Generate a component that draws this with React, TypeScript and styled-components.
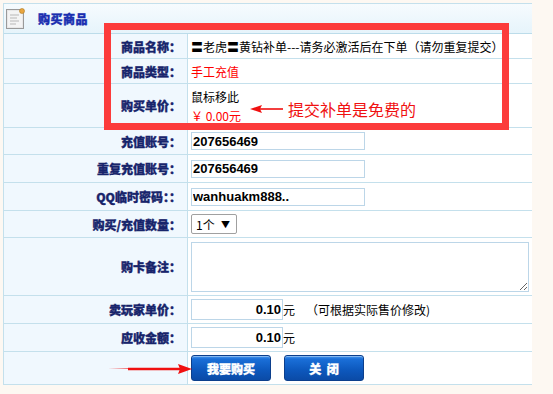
import React from 'react';
import styled, { createGlobalStyle } from 'styled-components';

const GlobalStyle = createGlobalStyle`
  html, body {
    margin: 0;
    padding: 0;
    background: #fdf8f2;
  }
  body {
    font-family: "Noto Sans CJK SC", "Liberation Sans", sans-serif;
    font-size: 12px;
  }
`;

const Page = styled.div`
  position: relative;
  width: 553px;
  height: 394px;
  padding: 3px 0 0 3px;
  box-sizing: border-box;
`;

const Table = styled.div`
  width: 529px;
  border-top: 1px solid #c4e0ec;
  border-left: 1px solid #c4e0ec;
  box-sizing: border-box;
  display: flex;
  flex-direction: column;
`;

const Header = styled.div`
  height: 30px;
  box-sizing: border-box;
  border-bottom: 1px solid #bcdcea;
  background: linear-gradient(#f6fbfe, #e6f4fb);
  display: flex;
  align-items: center;
  padding-left: 2px;
  gap: 12px;
`;

const Title = styled.span`
  font-weight: 900;
  font-size: 12px;
  color: #1a2fb0;
  letter-spacing: 0.5px;
  -webkit-text-stroke: 0.4px #1a2fb0;
`;

const Row = styled.div<{ h: number }>`
  height: ${(p) => p.h}px;
  box-sizing: border-box;
  border-bottom: 1px solid #c4e0ec;
  display: grid;
  grid-template-columns: 184px 1fr;
`;

const Label = styled.div`
  background: #f0f8fe;
  border-right: 1px solid #c4e0ec;
  display: flex;
  align-items: center;
  justify-content: flex-end;
  padding-right: 6px;
  font-weight: 900;
  color: #17246b;
  -webkit-text-stroke: 0.35px #17246b;
  font-size: 12px;
  white-space: nowrap;
`;

const Value = styled.div<{ stack?: boolean }>`
  background: #fff;
  display: flex;
  flex-direction: ${(p) => (p.stack ? 'column' : 'row')};
  justify-content: ${(p) => (p.stack ? 'center' : 'flex-start')};
  align-items: ${(p) => (p.stack ? 'flex-start' : 'center')};
  padding-left: 3px;
  color: #000;
  white-space: nowrap;
  gap: ${(p) => (p.stack ? '2px' : '0')};
`;

const Red = styled.span`
  color: #f00;
`;

const TextInput = styled.input<{ w: number; right?: boolean }>`
  width: ${(p) => p.w}px;
  height: ${(p) => (p.right ? 21 : 18)}px;
  box-sizing: border-box;
  border: 1px solid #bcd6e8;
  padding: 0 1px;
  font-family: "Liberation Sans", Arial, sans-serif;
  font-weight: bold;
  font-size: 13px;
  color: #000;
  text-align: ${(p) => (p.right ? 'right' : 'left')};
  outline: none;
`;

const SelectBox = styled.div`
  width: 46px;
  height: 20px;
  box-sizing: border-box;
  border: 1px solid #a0a0a0;
  border-radius: 2px;
  display: flex;
  align-items: center;
  justify-content: space-between;
  padding: 0 6px 0 4px;
  font-size: 12px;
  background: #fff;
`;

const Arrow = styled.span`
  font-size: 9px;
`;

const Memo = styled.textarea`
  width: 338px;
  height: 50px;
  box-sizing: border-box;
  border: 1px solid #bcd6e8;
  margin-top: 1px;
`;

const Unit = styled.span`
  font-size: 12px;
`;

const Hint = styled.span`
  font-size: 12px;
  margin-left: 11px;
`;

const Buttons = styled.div`
  display: flex;
  gap: 13px;
  align-items: center;
`;

const Btn = styled.button`
  width: 80px;
  height: 26px;
  border: 1px solid #0c3f8c;
  border-radius: 3px;
  background: linear-gradient(#4a9af0 0px, #1a6fd8 3px, #0d58bd 14px, #0a48a2 26px);
  color: #fff;
  font-weight: 900;
  -webkit-text-stroke: 0.35px #fff;
  font-size: 12px;
  font-family: "Noto Sans CJK SC", sans-serif;
  padding: 0;
  box-shadow: inset 0 1px 0 rgba(255, 255, 255, 0.35);
`;

const Annotation = styled.div`
  position: absolute;
  left: 104px;
  top: 23px;
  width: 405px;
  height: 107px;
  box-sizing: border-box;
  border: 7px solid #fc3b3b;
  pointer-events: none;
`;

const Note = styled.div`
  position: absolute;
  left: 250px;
  top: 100px;
  display: flex;
  align-items: center;
  gap: 4px;
  color: #f01010;
  font-size: 16px;
  line-height: 18px;
`;

const BottomArrow = styled.div`
  position: absolute;
  left: 108px;
  top: 361px;
`;

function NoteIcon() {
  return (
    <svg width="20" height="21" viewBox="0 0 20 21">
      <rect x="0.5" y="1.5" width="17" height="19" fill="#e8e8e8" stroke="#9a9a9a" />
      <rect x="2" y="3" width="14" height="16" fill="#f4f4f4" />
      <path d="M4 7h9M4 10h7M4 13h9M4 16h6" stroke="#b8b8b8" strokeWidth="1" />
      <circle cx="16" cy="3" r="2.5" fill="#e9a640" stroke="#b07a20" strokeWidth="0.6" />
    </svg>
  );
}

function RedArrow({ len }: { len: number }) {
  return (
    <svg width={len} height="12" viewBox={`0 0 ${len} 12`}>
      <line x1={len - 1} y1="6" x2="10" y2="6" stroke="#f01010" strokeWidth="1.6" />
      <polygon points="0,6 12,2 10,6 12,10" fill="#f01010" />
    </svg>
  );
}

function RightArrow({ len }: { len: number }) {
  return (
    <svg width={len} height="12" viewBox={`0 0 ${len} 12`}>
      <path d={`M0 5.5 L${len - 14} 5 L${len - 14} 7 Z`} fill="#f01010" />
      <line x1="20" y1="6" x2={len - 12} y2="6" stroke="#f01010" strokeWidth="2.4" />
      <polygon points={`${len},6 ${len - 14},1 ${len - 12},6 ${len - 14},11`} fill="#f01010" />
    </svg>
  );
}

export default function App() {
  return (
    <>
      <GlobalStyle />
      <Page>
        <Table>
          <Header>
            <NoteIcon />
            <Title>购买商品</Title>
          </Header>
          <Row h={25}>
            <Label>商品名称：</Label>
            <Value>〓老虎〓黄钻补单---请务必激活后在下单（请勿重复提交）</Value>
          </Row>
          <Row h={25}>
            <Label>商品类型：</Label>
            <Value>
              <Red>手工充值</Red>
            </Value>
          </Row>
          <Row h={44}>
            <Label>购买单价：</Label>
            <Value stack>
              <span>鼠标移此</span>
              <Red>￥ 0.00元</Red>
            </Value>
          </Row>
          <Row h={27}>
            <Label>充值账号：</Label>
            <Value>
              <TextInput w={174} defaultValue="207656469" />
            </Value>
          </Row>
          <Row h={28}>
            <Label>重复充值账号：</Label>
            <Value>
              <TextInput w={174} defaultValue="207656469" />
            </Value>
          </Row>
          <Row h={28}>
            <Label>QQ临时密码：：</Label>
            <Value>
              <TextInput w={174} defaultValue="wanhuakm888.." />
            </Value>
          </Row>
          <Row h={27}>
            <Label>购买/充值数量：</Label>
            <Value>
              <SelectBox>
                <span>1个</span>
                <Arrow>▼</Arrow>
              </SelectBox>
            </Value>
          </Row>
          <Row h={58}>
            <Label>购卡备注：</Label>
            <Value>
              <Memo />
            </Value>
          </Row>
          <Row h={28}>
            <Label>卖玩家单价：</Label>
            <Value>
              <TextInput w={92} right defaultValue="0.10" />
              <Unit>元</Unit>
              <Hint>（可根据实际售价修改)</Hint>
            </Value>
          </Row>
          <Row h={28}>
            <Label>应收金额：</Label>
            <Value>
              <TextInput w={92} right defaultValue="0.10" />
              <Unit>元</Unit>
            </Value>
          </Row>
          <Row h={33}>
            <Label />
            <Value>
              <Buttons>
                <Btn>我要购买</Btn>
                <Btn>关&nbsp;&nbsp;闭</Btn>
              </Buttons>
            </Value>
          </Row>
        </Table>
        <Annotation />
        <Note>
          <RedArrow len={34} />
          <span>提交补单是免费的</span>
        </Note>
        <BottomArrow>
          <RightArrow len={84} />
        </BottomArrow>
      </Page>
    </>
  );
}
